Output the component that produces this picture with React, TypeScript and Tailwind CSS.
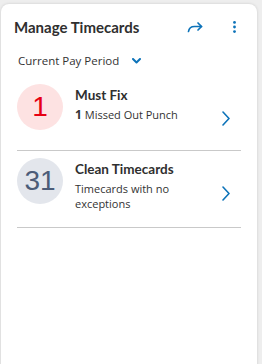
const rows = [
  {
    count: '1',
    title: 'Must Fix',
    circle: 'bg-[#fde2e2] text-[#e60012]',
    height: 'h-[74px]',
    sub: (
      <>
        <span className="font-bold text-[12px]">1</span> Missed Out Punch
      </>
    ),
  },
  {
    count: '31',
    title: 'Clean Timecards',
    circle: 'bg-[#e3e6ec] text-[#4c5c78]',
    height: 'h-[77px]',
    sub: <>Timecards with no exceptions</>,
  },
];

const App = () => {
  return (
    <div className="w-[262px] h-[364px] bg-[#eeeeee] pt-[4px] pl-[1px] overflow-hidden font-['Open_Sans',sans-serif]">
      <div className="w-[256px] h-[372px] bg-white rounded-[8px] shadow-[0_0_3px_rgba(0,0,0,0.15)]">
        <div className="flex items-center h-[46px] pl-[13px] pr-[21px]">
          <h1 className="text-[15px] font-bold text-[#2f2f2f] font-['Lato',sans-serif]">
            Manage Timecards
          </h1>
          <div className="ml-auto flex items-center gap-[30px]">
            <svg width="16" height="12" viewBox="0 0 16 12" fill="none" stroke="#0d73b9" strokeWidth="1.7" strokeLinecap="round" strokeLinejoin="round">
              <path d="M1.5 10.5 C2 7 4 5.5 7.5 5.5 H14.5" />
              <path d="M11 2 L14.5 5.5 L11 9" />
            </svg>
            <svg width="3" height="12" viewBox="0 0 3 12" fill="#0d73b9">
              <circle cx="1.5" cy="1.4" r="1.4" />
              <circle cx="1.5" cy="6" r="1.4" />
              <circle cx="1.5" cy="10.6" r="1.4" />
            </svg>
          </div>
        </div>
        <div className="flex items-center pl-[17px] h-[22px] text-[11.5px] text-[#333]">
          <span>Current Pay Period</span>
          <svg className="ml-[13px]" width="9" height="6" viewBox="0 0 9 6" fill="none" stroke="#0d73b9" strokeWidth="2" strokeLinecap="round" strokeLinejoin="round">
            <path d="M1 1 L4.5 4.5 L8 1" />
          </svg>
        </div>
        <div className="px-[16px] pt-[5px]">
          {rows.map((r) => (
            <div key={r.title} className={`flex items-start pt-[7px] border-b border-[#c9c9c9] ${r.height}`}>
              <div
                className={`w-[46px] h-[46px] rounded-full flex items-center justify-center shrink-0 ${r.circle} text-[28px] font-['Liberation_Sans',sans-serif]`}
              >
                {r.count}
              </div>
              <div className="ml-[12px] flex-1 min-w-0">
                <div className="text-[13.5px] leading-[20px] mt-[1px] font-bold text-[#2f2f2f] font-['Lato',sans-serif]">
                  {r.title}
                </div>
                <div className="text-[11px] text-[#333] leading-[15px] mt-[2px] w-[112px]">
                  {r.sub}
                </div>
              </div>
              <svg className="self-center mt-[2px] mr-[11px] shrink-0" width="8" height="15" viewBox="0 0 8 15" fill="none" stroke="#0d73b9" strokeWidth="1.6" strokeLinecap="round" strokeLinejoin="round">
                <path d="M1 1 L7 7.5 L1 14" />
              </svg>
            </div>
          ))}
        </div>
      </div>
    </div>
  );
};

export default App;
